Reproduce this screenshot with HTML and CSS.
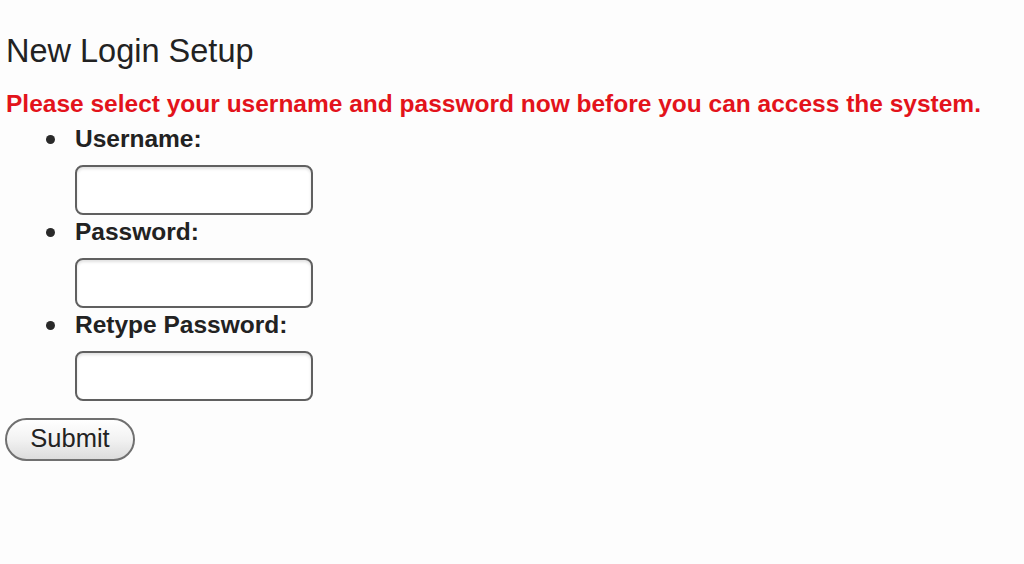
FILE: index.html
```html
<!DOCTYPE html>
<html>
<head>
<meta charset="utf-8">
<link rel="stylesheet" href="styles.css">
</head>
<body>
<main class="page">
  <h1 class="title">New Login Setup</h1>
  <p class="notice">Please select your username and password now before you can access the system.</p>
  <ul class="fields">
    <li class="field">
      <span class="label">Username:</span>
      <input class="box" type="text">
    </li>
    <li class="field">
      <span class="label">Password:</span>
      <input class="box" type="password">
    </li>
    <li class="field">
      <span class="label">Retype Password:</span>
      <input class="box" type="password">
    </li>
  </ul>
  <button class="submit" type="button">Submit</button>
</main>
</body>
</html>
```
FILE: styles.css
```css
html, body {
  margin: 0;
  padding: 0;
  background: #fdfdfd;
}
body {
  font-family: "Liberation Sans", Arial, sans-serif;
  color: #222;
}
.page {
  padding: 31px 5px 0 5px;
}
.title {
  margin: 0 0 0 1px;
  font-size: 32.5px;
  font-weight: normal;
  line-height: 40px;
  color: #222;
}
.notice {
  margin: 17.5px 0 0 1px;
  font-size: 24.5px;
  font-weight: bold;
  line-height: 30px;
  color: #e3131b;
  white-space: nowrap;
}
.fields {
  margin: 4.5px 0 0 0;
  padding: 0 0 0 70px;
  list-style: none;
}
.field {
  position: relative;
  display: flex;
  flex-direction: column;
  align-items: flex-start;
  height: 93px;
}
.field::before {
  content: "";
  position: absolute;
  left: -29.5px;
  top: 11.5px;
  width: 9px;
  height: 9px;
  border-radius: 50%;
  background: #2a2a2a;
}
.label {
  font-size: 24.5px;
  font-weight: bold;
  line-height: 32px;
  color: #222;
}
.box {
  margin: 10px 0 0 0;
  width: 238px;
  height: 50px;
  box-sizing: border-box;
  border: 2px solid #606060;
  border-radius: 8px;
  background: #fff;
  box-shadow: inset 0 2px 3px rgba(0,0,0,0.12);
  padding: 0 8px;
  font-size: 20px;
}
.submit {
  display: block;
  margin: 16px 0 0 0;
  width: 130px;
  height: 43px;
  box-sizing: border-box;
  border: 2px solid #707070;
  border-radius: 22px;
  background: linear-gradient(#ffffff, #f2f2f2 50%, #dcdcdc);
  font-family: "Liberation Sans", Arial, sans-serif;
  font-size: 25.5px;
  color: #222;
  padding: 0 0 2px 0;
}
```
